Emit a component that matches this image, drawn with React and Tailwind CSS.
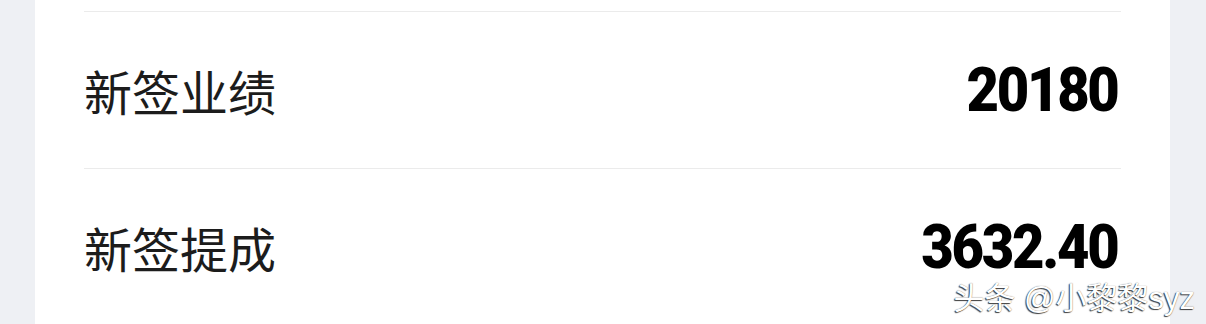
import React from "react";

const rows = [
  { label: "新签业绩", value: "20180" },
  { label: "新签提成", value: "3632.40" },
];

const App = () => {
  return (
    <div className="relative h-[324px] w-full overflow-hidden bg-[#eef0f4]">
      {/* Card */}
      <div className="ml-[35px] h-full w-[1135px] bg-white px-[49px] pt-[11px]">
        {rows.map((row) => (
          <div
            key={row.label}
            className="flex h-[157px] items-center justify-between border-t border-[#ebebeb]"
          >
            <span
              className="text-[48px] leading-none text-[#1c1c1c]"
              style={{ fontFamily: '"Noto Sans CJK SC", "Noto Sans", sans-serif' }}
            >
              {row.label}
            </span>
            <span
              className="inline-block origin-right scale-x-[0.92] pr-[4px] text-[61px] font-black leading-none tracking-[-2.5px] text-black"
              style={{ fontFamily: "Roboto, 'Liberation Sans', sans-serif" }}
            >
              {row.value}
            </span>
          </div>
        ))}
      </div>

      {/* Watermark */}
      <div
        className="absolute bottom-[10px] right-[11px] text-[31px] leading-none text-white [text-shadow:-1px_1px_1px_rgba(0,0,0,0.75),0_0_1px_rgba(0,0,0,0.6)]"
        style={{ fontFamily: '"Liberation Sans", "Noto Sans CJK SC", sans-serif' }}
      >
        头条 @小黎黎syz
      </div>
    </div>
  );
};

export default App;
